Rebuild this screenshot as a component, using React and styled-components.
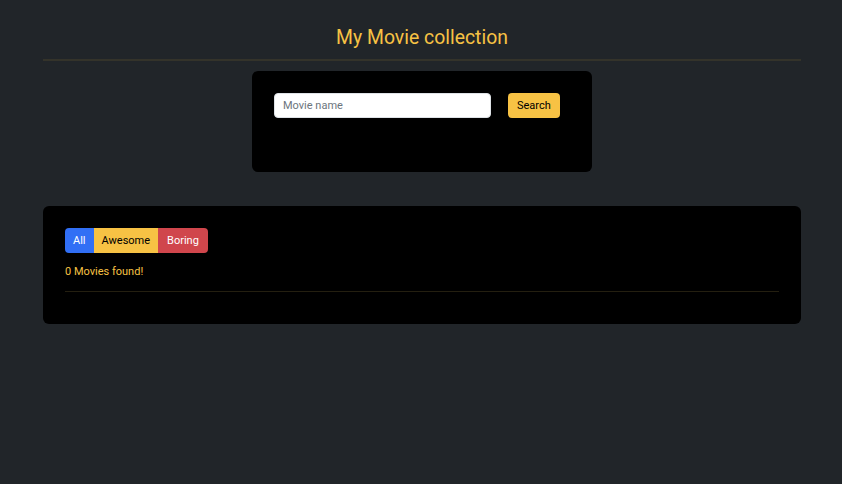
import React, { useState } from "react";
import styled, { createGlobalStyle } from "styled-components";

const GlobalStyle = createGlobalStyle`
  html, body {
    margin: 0;
    background: #212529;
    font-family: Roboto, "Noto Sans", "Liberation Sans", sans-serif;
  }
`;

const Page = styled.div`
  padding: 0 41px 0 43px;
  min-height: 484px;
  box-sizing: border-box;
`;

const Title = styled.h1`
  margin: 0;
  padding-top: 26px;
  height: 33px;
  font-size: 19.4px;
  font-weight: 400;
  line-height: 24px;
  color: #f7c244;
  text-align: center;
`;

const Rule = styled.hr`
  margin: ${(p) => p.$margin || "0"};
  border: 0;
  border-top: ${(p) => p.$size || 2}px solid ${(p) => p.$color || "#35342b"};
`;

const Card = styled.div`
  background: #000;
  border-radius: 6px;
  box-sizing: border-box;
  width: ${(p) => p.$width || "auto"};
  height: ${(p) => p.$height || "auto"};
  margin: ${(p) => p.$margin || "0"};
  padding: 22px;
`;

const SearchRow = styled.form`
  display: flex;
  align-items: center;
  gap: 17px;
`;

const Input = styled.input`
  width: 217px;
  height: 25px;
  box-sizing: border-box;
  border: 1px solid #dee2e6;
  border-radius: 4px;
  padding: 0 8px;
  font-family: inherit;
  font-size: 11px;
  color: #212529;
  outline: none;
  &::placeholder {
    color: #6c757d;
  }
`;

const Button = styled.button`
  height: 25px;
  box-sizing: border-box;
  border: 0;
  padding: 0 ${(p) => p.$px || 9}px;
  font-family: inherit;
  font-size: 11px;
  background: ${(p) => p.$bg};
  color: ${(p) => p.$fg};
  border-radius: 4px;
  cursor: pointer;
`;

const Group = styled.div`
  display: inline-flex;
  & > ${Button} {
    border-radius: 0;
  }
  & > ${Button}:first-child {
    border-radius: 4px 0 0 4px;
  }
  & > ${Button}:last-child {
    border-radius: 0 4px 4px 0;
  }
`;

const Found = styled.p`
  margin: 12px 0 0;
  font-size: 11px;
  line-height: 14px;
  color: #f7c244;
`;

const filters = [
  { label: "All", bg: "#316ff5", fg: "#fff", px: 8 },
  { label: "Awesome", bg: "#f7c244", fg: "#000", px: 8 },
  { label: "Boring", bg: "#d0464c", fg: "#fff", px: 9 },
];

export default function App() {
  const [query, setQuery] = useState("");
  const movies = [];

  return (
    <>
      <GlobalStyle />
      <Page>
        <Title>My Movie collection</Title>
        <Rule $color="#34332a" />
        <Card $width="340px" $height="101px" $margin="10px auto 0">
          <SearchRow onSubmit={(e) => e.preventDefault()}>
            <Input
              placeholder="Movie name"
              value={query}
              onChange={(e) => setQuery(e.target.value)}
            />
            <Button $bg="#f7c244" $fg="#000">
              Search
            </Button>
          </SearchRow>
        </Card>
        <Card $height="118px" $margin="34px 0 0">
          <Group>
            {filters.map((f) => (
              <Button key={f.label} $bg={f.bg} $fg={f.fg} $px={f.px}>
                {f.label}
              </Button>
            ))}
          </Group>
          <Found>{movies.length} Movies found!</Found>
          <Rule $size={1} $color="#241f10" $margin="12px 0 0" />
        </Card>
      </Page>
    </>
  );
}
